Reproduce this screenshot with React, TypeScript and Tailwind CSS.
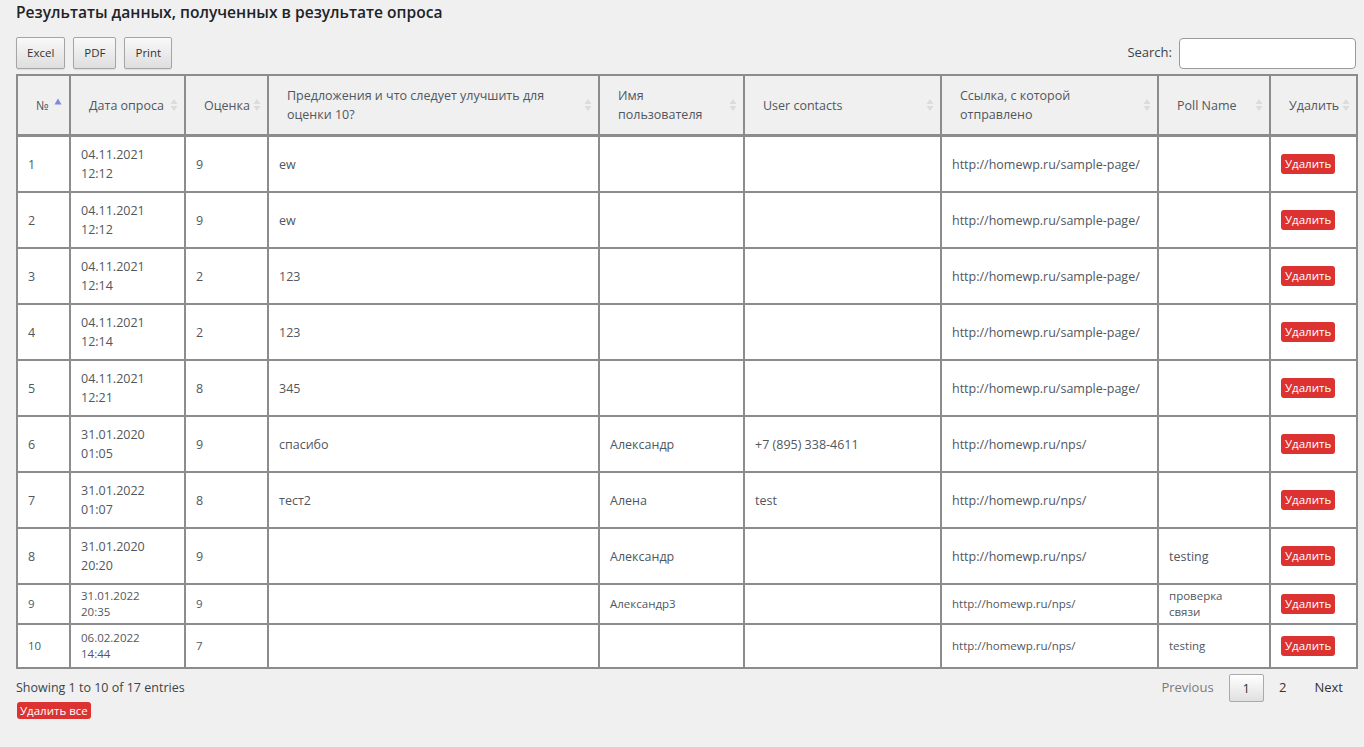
import React from "react";

type Row = {
  n: string;
  d: string;
  t: string;
  s: string;
  sug: string;
  name: string;
  contact: string;
  url: string;
  poll: string;
};

const rows: Row[] = [
  { n: "1", d: "04.11.2021", t: "12:12", s: "9", sug: "ew", name: "", contact: "", url: "http://homewp.ru/sample-page/", poll: "" },
  { n: "2", d: "04.11.2021", t: "12:12", s: "9", sug: "ew", name: "", contact: "", url: "http://homewp.ru/sample-page/", poll: "" },
  { n: "3", d: "04.11.2021", t: "12:14", s: "2", sug: "123", name: "", contact: "", url: "http://homewp.ru/sample-page/", poll: "" },
  { n: "4", d: "04.11.2021", t: "12:14", s: "2", sug: "123", name: "", contact: "", url: "http://homewp.ru/sample-page/", poll: "" },
  { n: "5", d: "04.11.2021", t: "12:21", s: "8", sug: "345", name: "", contact: "", url: "http://homewp.ru/sample-page/", poll: "" },
  { n: "6", d: "31.01.2020", t: "01:05", s: "9", sug: "спасибо", name: "Александр", contact: "+7 (895) 338-4611", url: "http://homewp.ru/nps/", poll: "" },
  { n: "7", d: "31.01.2022", t: "01:07", s: "8", sug: "тест2", name: "Алена", contact: "test", url: "http://homewp.ru/nps/", poll: "" },
  { n: "8", d: "31.01.2020", t: "20:20", s: "9", sug: "", name: "Александр", contact: "", url: "http://homewp.ru/nps/", poll: "testing" },
];

const smallRows: Row[] = [
  { n: "9", d: "31.01.2022", t: "20:35", s: "9", sug: "", name: "Александр3", contact: "", url: "http://homewp.ru/nps/", poll: "проверка связи" },
  { n: "10", d: "06.02.2022", t: "14:44", s: "7", sug: "", name: "", contact: "", url: "http://homewp.ru/nps/", poll: "testing" },
];

const SortBoth = () => (
  <svg width="8" height="14" viewBox="0 0 8 14" className="absolute right-[6px] top-1/2 -translate-y-1/2">
    <path d="M4 1 L7.5 6 L0.5 6 Z" fill="#dcdcdc" />
    <path d="M4 13 L7.5 8 L0.5 8 Z" fill="#dcdcdc" />
  </svg>
);

const SortAsc = () => (
  <svg width="8" height="7" viewBox="0 0 8 7" className="absolute right-[7px] top-[22px]">
    <path d="M4 0.5 L7.5 6.5 L0.5 6.5 Z" fill="#8088d8" />
  </svg>
);

const headers: { label: React.ReactNode; w: number; asc?: boolean }[] = [
  { label: "№", w: 53, asc: true },
  { label: "Дата опроса", w: 115 },
  { label: "Оценка", w: 83 },
  { label: <>Предложения и что следует улучшить для<br />оценки 10?</>, w: 331 },
  { label: <>Имя<br />пользователя</>, w: 145 },
  { label: "User contacts", w: 197 },
  { label: <>Ссылка, с которой<br />отправлено</>, w: 217 },
  { label: "Poll Name", w: 112 },
  { label: "Удалить", w: 87 },
];

function BodyRow({ r, small, py }: { r: Row; small?: boolean; py: string }) {
  const td = `border-2 border-[#8c8c8c] px-[10px] align-middle whitespace-nowrap ${py} ${small ? "text-[11.5px] leading-[16px]" : "text-[12.5px] leading-[19px]"}`;
  return (
    <tr className="bg-white">
      <td className={td}>{r.n}</td>
      <td className={td}>
        {r.d}
        <br />
        {r.t}
      </td>
      <td className={td}>{r.s}</td>
      <td className={td}>{r.sug}</td>
      <td className={td}>{r.name}</td>
      <td className={td}>{r.contact}</td>
      <td className={td}>{r.url}</td>
      <td className={td}>{r.poll === "проверка связи" ? <>проверка<br />связи</> : r.poll}</td>
      <td className={td}>
        <button className="bg-[#dc3232] text-white text-[11.5px] leading-[20px] h-[20px] px-[4px] rounded-[3px]">
          Удалить
        </button>
      </td>
    </tr>
  );
}

export default function App() {
  return (
    <div
      className="min-h-[747px] bg-[#f0f0f0] pl-4 pr-2 text-[#50575e]"
      style={{ fontFamily: '"Open Sans", "Noto Sans", Arial, sans-serif' }}
    >
      <h1 className="text-[15.6px] leading-[24px] font-semibold text-[#1d2327]">
        Результаты данных, полученных в результате опроса
      </h1>

      <div className="mt-[13px] flex items-center justify-between">
        <div className="flex gap-2">
          {["Excel", "PDF", "Print"].map((b) => (
            <button
              key={b}
              className="h-[32px] px-[10px] text-[11.5px] text-[#333] border border-[#a5a5a5] rounded-[2px] bg-gradient-to-b from-[#f9f9f9] to-[#dedede] shadow-[0_1px_1px_rgba(0,0,0,0.08)]"
            >
              {b}
            </button>
          ))}
        </div>
        <div className="flex items-center gap-[7px] text-[13px] text-[#3c434a]">
          <span>Search:</span>
          <input className="w-[177px] h-[31px] bg-white border border-[#9a9a9a] rounded-[4px]" />
        </div>
      </div>

      <table className="mt-[5px] table-fixed border-collapse w-[1340px] border-2 border-[#8c8c8c]">
        <colgroup>
          {headers.map((h, i) => (
            <col key={i} style={{ width: h.w }} />
          ))}
        </colgroup>
        <thead>
          <tr className="bg-[#f0f0f0]">
            {headers.map((h, i) => (
              <th
                key={i}
                className="relative border-2 border-[#8c8c8c] border-b-[3px] pl-[18px] pr-[16px] py-[10px] text-left font-normal text-[12.5px] leading-[19px] h-[58px] align-middle whitespace-nowrap"
              >
                {h.label}
                {h.asc ? <SortAsc /> : <SortBoth />}
              </th>
            ))}
          </tr>
        </thead>
        <tbody>
          {rows.map((r) => (
            <BodyRow key={r.n} r={r} py="py-[8px]" />
          ))}
          <BodyRow r={smallRows[0]} small py="py-[3px]" />
          <BodyRow r={smallRows[1]} small py="py-[5px]" />
        </tbody>
      </table>

      <div className="flex justify-between pt-[5px]">
        <div>
          <div className="mt-[4px] text-[12.5px] leading-[19px] text-[#3c434a]">Showing 1 to 10 of 17 entries</div>
          <button className="mt-[5px] ml-px h-[17px] px-[3px] bg-[#dc3232] text-white text-[11.5px] leading-[17px] rounded-[3px]">
            Удалить все
          </button>
        </div>
        <div className="flex items-start text-[13px] leading-[19px]">
          <span className="px-[13px] py-[4px] text-[#7a7a7a]">Previous</span>
          <span className="ml-[2px] h-[28px] min-w-[35px] px-[13px] flex items-center justify-center border border-[#aaa] rounded-[2px] bg-gradient-to-b from-white to-[#e0e0e0] text-[#333]">
            1
          </span>
          <span className="ml-[2px] px-[13px] py-[4px] text-[#333]">2</span>
          <span className="ml-[2px] px-[13px] py-[4px] text-[#333]">Next</span>
        </div>
      </div>
    </div>
  );
}
